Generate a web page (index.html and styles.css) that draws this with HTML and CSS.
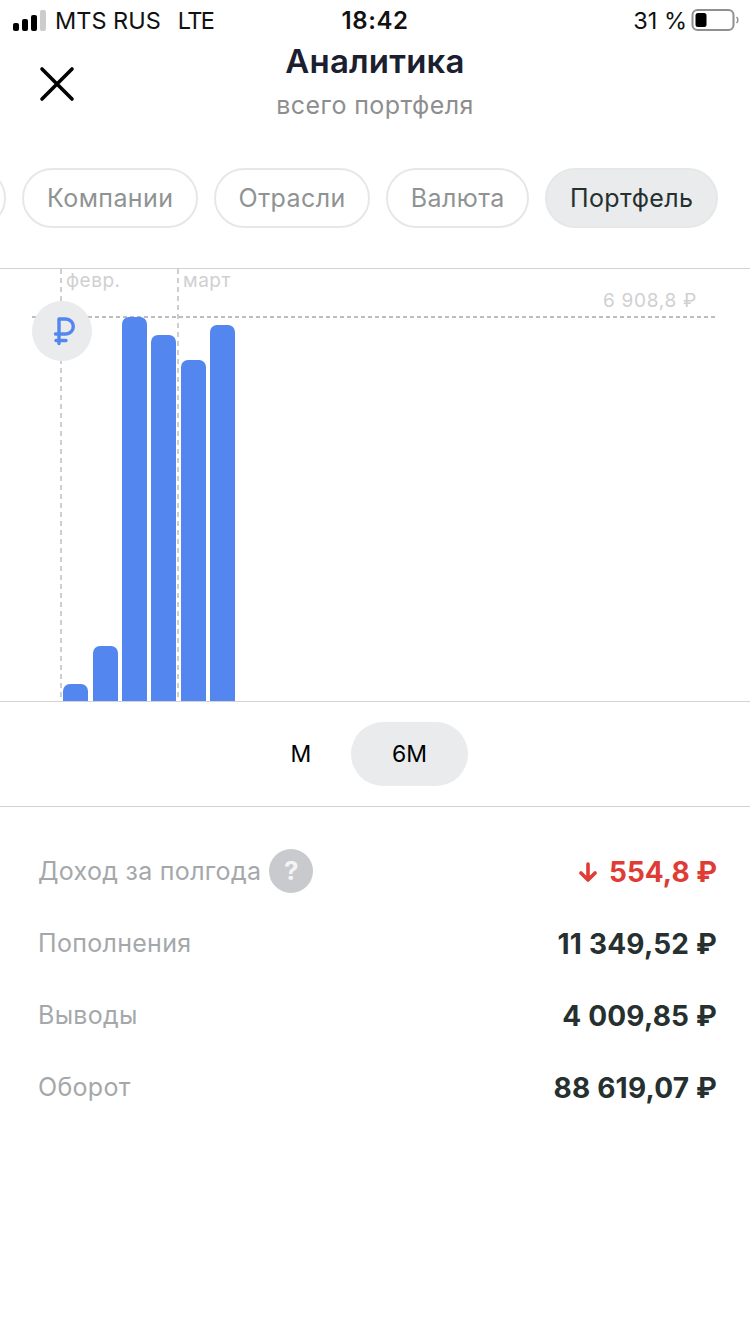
FILE: index.html
```html
<!DOCTYPE html>
<html lang="ru">
<head>
    <meta charset="UTF-8">
    <title>Аналитика</title>
    <link rel="stylesheet" href="styles.css">
</head>
<body>
<div class="status-bar">
    <div class="status-left">
        <div class="signal">
            <span class="signal-bar s1"></span>
            <span class="signal-bar s2"></span>
            <span class="signal-bar s3"></span>
            <span class="signal-bar s4"></span>
        </div>
        <span>MTS RUS</span>
        <span class="network">LTE</span>
    </div>
    <div class="status-time">18:42</div>
    <div class="status-right">
        <span>31 %</span>
        <svg class="battery" width="48" height="24" viewBox="0 0 48 24">
            <rect x="1.5" y="2" width="41" height="20" rx="5" fill="none" stroke="#909090" stroke-width="2"/>
            <rect x="4.5" y="5" width="11" height="14" rx="2.5" fill="#000"/>
            <path d="M45.5 9 a4 4 0 0 1 0 6" fill="none" stroke="#909090" stroke-width="1.5"/>
        </svg>
    </div>
</div>

<div class="nav">
    <svg class="close-icon" width="36" height="36" viewBox="0 0 36 36">
        <path d="M3 3 L33 33 M33 3 L3 33" stroke="#000" stroke-width="3.6" stroke-linecap="round"/>
    </svg>
    <h1 class="nav-title">Аналитика</h1>
    <div class="nav-sub">всего портфеля</div>
</div>

<div class="tabs">
    <div class="tab cut-off"></div>
    <div class="tab">Компании</div>
    <div class="tab">Отрасли</div>
    <div class="tab">Валюта</div>
    <div class="tab active">Портфель</div>
</div>

<div class="chart">
    <div class="month-line feb"></div>
    <div class="month-line mar"></div>
    <div class="month-label feb-label">февр.</div>
    <div class="month-label mar-label">март</div>
    <div class="max-line"></div>
    <div class="max-label">6 908,8 ₽</div>
    <div class="currency-badge">
        <svg width="24" height="30" viewBox="0 0 24 30">
            <path d="M7 27.5 V3 H13.8 a7.5 7.5 0 0 1 0 15 H3.5 M4 24.5 H14" fill="none" stroke="#5387ef" stroke-width="3.4" stroke-linecap="round" stroke-linejoin="round"/>
        </svg>
    </div>
    <div class="bars">
        <div class="bar" style="height: 17px"></div>
        <div class="bar" style="height: 55px"></div>
        <div class="bar" style="height: 384px"></div>
        <div class="bar" style="height: 366px"></div>
        <div class="bar" style="height: 341px"></div>
        <div class="bar" style="height: 376px"></div>
    </div>
</div>

<div class="periods">
    <div class="period">М</div>
    <div class="period active">6М</div>
</div>

<div class="stats">
    <div class="stat-row">
        <div class="stat-label">Доход за полгода <span class="help">?</span></div>
        <div class="stat-value negative">
            <svg class="down-arrow" width="18" height="20" viewBox="0 0 18 20">
                <path d="M9 2 V18 M2 11 L9 18 L16 11" fill="none" stroke="#e03c36" stroke-width="3.6" stroke-linecap="round" stroke-linejoin="round"/>
            </svg>
            <span>554,8 ₽</span>
        </div>
    </div>
    <div class="stat-row">
        <div class="stat-label">Пополнения</div>
        <div class="stat-value">11 349,52 ₽</div>
    </div>
    <div class="stat-row">
        <div class="stat-label">Выводы</div>
        <div class="stat-value">4 009,85 ₽</div>
    </div>
    <div class="stat-row">
        <div class="stat-label">Оборот</div>
        <div class="stat-value">88 619,07 ₽</div>
    </div>
</div>
</body>
</html>
```

FILE: styles.css
```css
body {
    margin: 0;
    width: 750px;
    height: 1334px;
    overflow: hidden;
    background-color: #fff;
    font-family: Inter, "Noto Sans", sans-serif;
    color: #000;
}

.status-bar {
    display: grid;
    grid-template-columns: 1fr auto 1fr;
    align-items: center;
    height: 40px;
    padding: 0 11px 0 13px;
    font-size: 23.5px;
    color: #111;
}

.status-left {
    display: flex;
    align-items: center;
}

.signal {
    display: flex;
    align-items: flex-end;
    gap: 3px;
    height: 21px;
    margin-right: 9px;
}

.signal-bar {
    width: 6px;
    border-radius: 2px;
    background-color: #000;
}

.s1 { height: 8px; }
.s2 { height: 12px; }
.s3 { height: 16px; }
.s4 { height: 21px; background-color: #ccc; }

.network {
    margin-left: 17px;
    letter-spacing: -1.6px;
}

.status-time {
    margin-right: 2px;
    font-weight: 600;
    font-size: 24px;
    letter-spacing: 0.6px;
}

.status-right {
    display: flex;
    align-items: center;
    justify-content: flex-end;
    gap: 4px;
}

.nav {
    position: relative;
    height: 88px;
    text-align: center;
}

.close-icon {
    position: absolute;
    left: 39px;
    top: 26px;
}

.nav-title {
    margin: 0;
    padding-top: 1px;
    font-size: 33px;
    line-height: 40px;
    font-weight: 600;
    letter-spacing: 0.2px;
    color: #1b2030;
}

.nav-sub {
    margin-top: 4px;
    font-size: 25px;
    line-height: 40px;
    letter-spacing: 0.4px;
    color: #8e8e90;
}

.tabs {
    display: flex;
    justify-content: flex-end;
    gap: 16px;
    overflow: hidden;
    margin-top: 40px;
    padding-right: 32px;
}

.tab {
    flex-shrink: 0;
    box-sizing: border-box;
    height: 60px;
    padding: 0 22.6px;
    border: 2px solid #e6e8e8;
    border-radius: 30px;
    font-size: 25px;
    line-height: 56px;
    letter-spacing: 0.4px;
    color: #8f9393;
}

.tab.cut-off {
    width: 120px;
}

.tab.active {
    background-color: #e9ebec;
    color: #25302f;
}

.chart {
    position: relative;
    height: 432px;
    margin-top: 40px;
    border-top: 1px solid #d2d2d4;
    border-bottom: 1px solid #d2d2d4;
}

.bars {
    position: absolute;
    left: 63.2px;
    bottom: 0;
    display: flex;
    align-items: flex-end;
    gap: 4.4px;
}

.bar {
    width: 25px;
    border-radius: 7px 7px 0 0;
    background-color: #5387ef;
}

.month-line {
    position: absolute;
    top: 0;
    bottom: 0;
    width: 2px;
    background-image: repeating-linear-gradient(to bottom, #cfcfd1 0, #cfcfd1 5px, transparent 5px, transparent 9px);
}

.feb { left: 60px; }
.mar { left: 177px; z-index: 1; }

.month-label {
    position: absolute;
    top: 0;
    font-size: 19px;
    line-height: 23px;
    letter-spacing: 0.5px;
    color: #cfd0d2;
}

.feb-label { left: 66px; }
.mar-label { left: 183px; }

.max-line {
    position: absolute;
    left: 32px;
    right: 32px;
    top: 47px;
    height: 2px;
    background-image: repeating-linear-gradient(to right, #bdbdbf 0, #bdbdbf 4px, transparent 4px, transparent 7px);
}

.max-label {
    position: absolute;
    right: 53px;
    top: 20px;
    font-size: 19px;
    line-height: 24px;
    letter-spacing: 0.7px;
    color: #cfd0d2;
}

.currency-badge {
    position: absolute;
    left: 32px;
    top: 32px;
    display: flex;
    align-items: center;
    justify-content: center;
    width: 60px;
    height: 60px;
    border-radius: 50%;
    background-color: #e9ebec;
}

.currency-badge svg {
    margin-left: 4px;
}

.periods {
    display: flex;
    justify-content: center;
    align-items: center;
    height: 104px;
    padding-right: 31px;
    border-bottom: 1px solid #d2d2d4;
}

.period {
    font-size: 23px;
    line-height: 64px;
    height: 64px;
    width: 100px;
    text-align: center;
}

.period.active {
    width: 117px;
    border-radius: 32px;
    background-color: #e9ebec;
}

.stats {
    padding: 28px 33px 0 38px;
}

.stat-row {
    display: flex;
    align-items: center;
    justify-content: space-between;
    height: 72px;
}

.stat-label {
    display: flex;
    align-items: center;
    gap: 8px;
    font-size: 25px;
    letter-spacing: 0.3px;
    color: #a5a8aa;
}

.help {
    display: inline-block;
    width: 44px;
    height: 44px;
    border-radius: 50%;
    background-color: #c8cacd;
    font-size: 26px;
    font-weight: 700;
    line-height: 44px;
    text-align: center;
    letter-spacing: 0;
    color: #f4f4f5;
}

.stat-value {
    display: flex;
    align-items: center;
    padding-top: 1px;
    font-size: 28px;
    font-weight: 700;
    letter-spacing: 0.2px;
    color: #25302f;
}

.negative {
    letter-spacing: 0;
    color: #e03c36;
}

.down-arrow {
    margin-right: 12px;
}
```
